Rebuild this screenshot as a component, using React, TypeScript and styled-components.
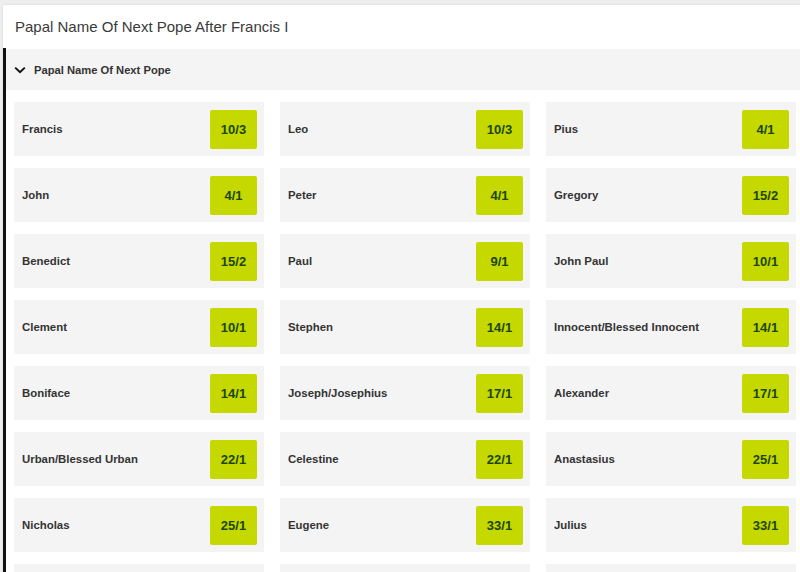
import styled, { createGlobalStyle } from "styled-components"

const GlobalStyle = createGlobalStyle`
  html, body {
    margin: 0;
    padding: 0;
    background: #eeeeee;
    font-family: "Liberation Sans", Arial, sans-serif;
  }
`

type Selection = {
  name: string
  odds: string
}

const selections: Selection[] = [
  { name: "Francis", odds: "10/3" },
  { name: "Leo", odds: "10/3" },
  { name: "Pius", odds: "4/1" },
  { name: "John", odds: "4/1" },
  { name: "Peter", odds: "4/1" },
  { name: "Gregory", odds: "15/2" },
  { name: "Benedict", odds: "15/2" },
  { name: "Paul", odds: "9/1" },
  { name: "John Paul", odds: "10/1" },
  { name: "Clement", odds: "10/1" },
  { name: "Stephen", odds: "14/1" },
  { name: "Innocent/Blessed Innocent", odds: "14/1" },
  { name: "Boniface", odds: "14/1" },
  { name: "Joseph/Josephius", odds: "17/1" },
  { name: "Alexander", odds: "17/1" },
  { name: "Urban/Blessed Urban", odds: "22/1" },
  { name: "Celestine", odds: "22/1" },
  { name: "Anastasius", odds: "25/1" },
  { name: "Nicholas", odds: "25/1" },
  { name: "Eugene", odds: "33/1" },
  { name: "Julius", odds: "33/1" },
]

// next row is only peeking in at the bottom edge of the window
const pendingRow = 3

const Chevron = () => (
  <svg width="12" height="8" viewBox="0 0 12 8" aria-hidden="true">
    <path d="M1.2 1.6 L6 6.2 L10.8 1.6" fill="none" stroke="#111" strokeWidth="2" />
  </svg>
)

export default function App() {
  return (
    <Page>
      <GlobalStyle />
      <Market>
        <Title>Papal Name Of Next Pope After Francis I</Title>

        <Section>
          <SectionHeader>
            <Chevron />
            <SectionName>Papal Name Of Next Pope</SectionName>
          </SectionHeader>

          <Grid>
            {selections.map((s) => (
              <Outcome key={s.name}>
                <OutcomeName>{s.name}</OutcomeName>
                <OddsButton>{s.odds}</OddsButton>
              </Outcome>
            ))}
            {Array.from({ length: pendingRow }, (_, i) => (
              <Outcome key={`pending-${i}`} />
            ))}
          </Grid>
        </Section>
      </Market>
    </Page>
  )
}

const Page = styled.div`
  height: 572px;
  overflow: hidden;
  padding: 5px 0 0 3px;
  box-sizing: border-box;
`

const Market = styled.div`
  background: #ffffff;
  box-shadow: 0 0 2px rgba(0, 0, 0, 0.12);
`

const Title = styled.h1`
  margin: 0;
  height: 43px;
  display: flex;
  align-items: center;
  padding-left: 12px;

  font-size: 15px;
  font-weight: 400;
  color: #3a3a3a;
`

const Section = styled.div`
  border-left: 3px solid #111111;
  padding-top: 1px;
`

const SectionHeader = styled.div`
  display: flex;
  align-items: center;
  gap: 8px;
  height: 41px;
  padding-left: 8px;

  background: #f4f4f4;
`

const SectionName = styled.span`
  font-size: 11.2px;
  font-weight: 700;
  color: #333333;
`

const Grid = styled.div`
  display: grid;
  grid-template-columns: repeat(3, 250px);
  gap: 12px 16px;
  padding: 12px 0 0 8px;
`

const Outcome = styled.div`
  display: flex;
  align-items: center;
  justify-content: space-between;
  height: 54px;
  padding: 0 7px 0 8px;
  box-sizing: border-box;

  background: #f4f4f4;
`

const OutcomeName = styled.span`
  font-size: 11.4px;
  font-weight: 700;
  color: #333333;
`

const OddsButton = styled.button`
  width: 47px;
  height: 39px;
  padding: 0;
  border: none;
  border-radius: 2px;

  background: #c5d900;
  color: #1b4604;
  font-family: inherit;
  font-size: 13px;
  font-weight: 700;
  cursor: pointer;
`
